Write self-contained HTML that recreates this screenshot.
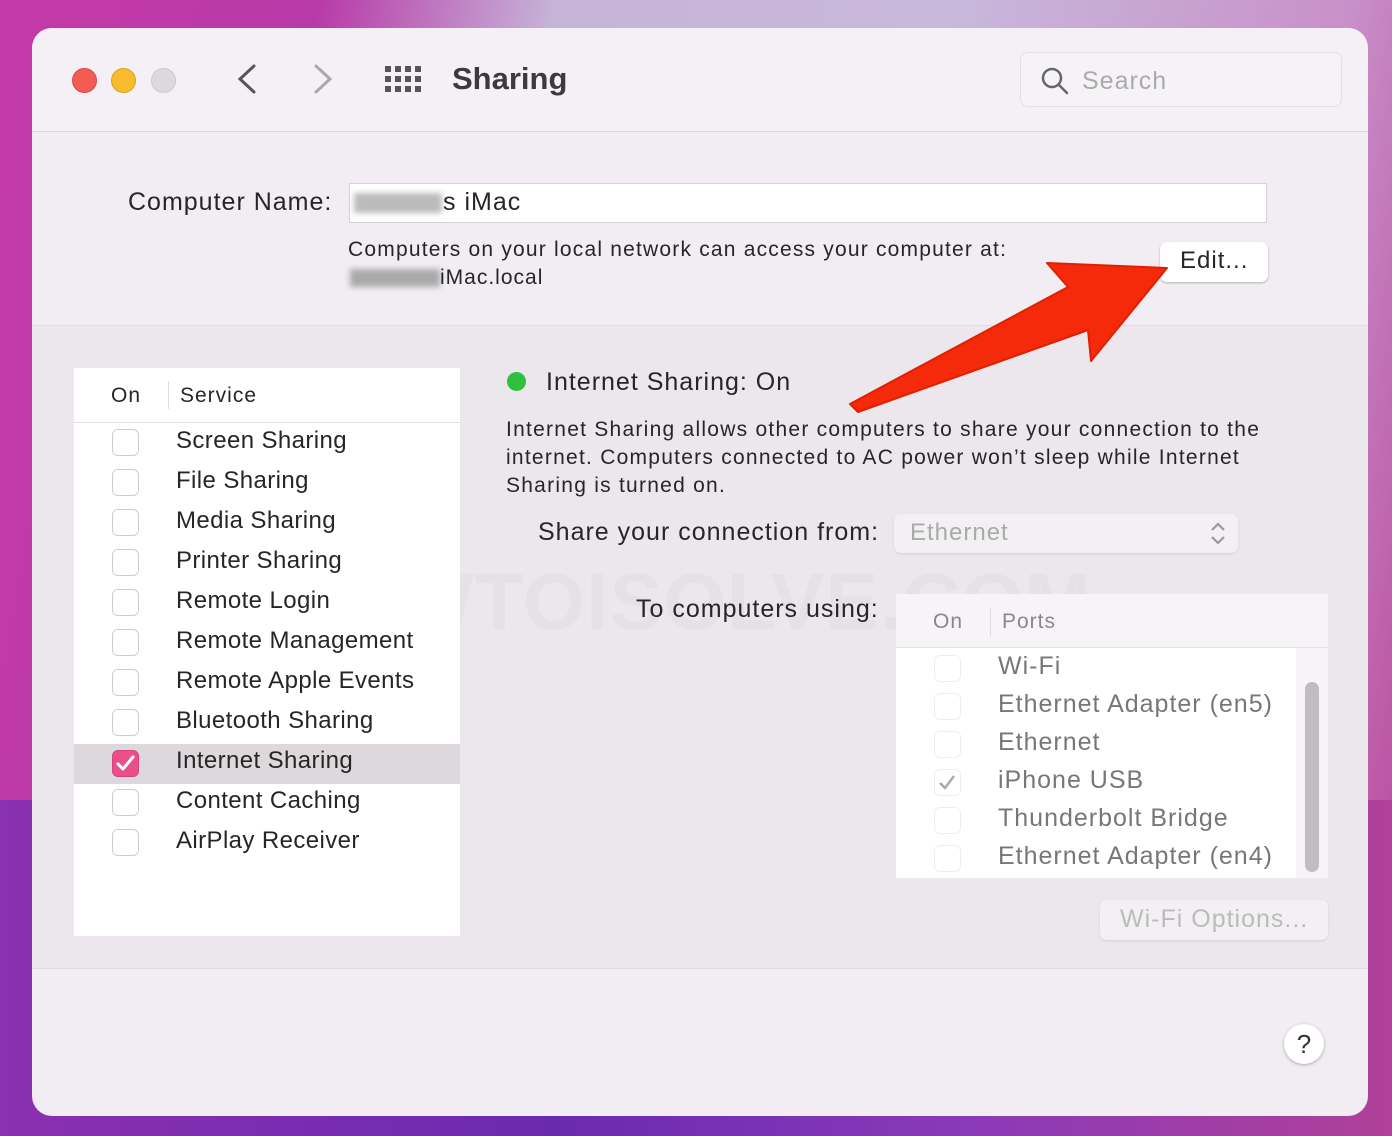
<!DOCTYPE html>
<html><head><meta charset="utf-8"><style>
*{margin:0;padding:0;box-sizing:border-box}
body{width:1392px;height:1136px;overflow:hidden;font-family:"Liberation Sans",sans-serif;background:linear-gradient(100deg,#c43aa8 0%,#b83aa8 20%,#c6b4d8 35%,#c8b8dc 60%,#c890c8 85%,#b84098 100%);position:relative}
.bgbot{position:absolute;left:0;top:800px;width:1392px;height:336px;background:linear-gradient(90deg,#8a30b0,#6a2ab0 40%,#8a3ab8 70%,#b04098)}
.win{position:absolute;left:32px;top:28px;width:1336px;height:1088px;border-radius:20px;overflow:hidden;background:#f1edf2}
.tb{position:absolute;left:0;top:0;width:100%;height:104px;background:#f4f0f5;border-bottom:1px solid #dcd8dd}
.mid{position:absolute;left:0;top:297px;width:100%;height:644px;background:#ebe7ec;border-top:1px solid #e0dce1;border-bottom:1px solid #e0dce1}
.t{position:absolute;white-space:nowrap;color:#262626;letter-spacing:1px}
.l{letter-spacing:0.4px}
.dot{position:absolute;width:25px;height:25px;border-radius:50%;top:40px}
.cb{position:absolute;width:27px;height:27px;border:1px solid #cfcbd0;border-radius:6px;background:#fff}
.list{position:absolute;background:#fff}
</style></head><body>
<div class="bgbot"></div>
<div class="win">
<div class="tb"></div>
<div class="dot" style="left:40px;background:#f25c54;border:1px solid #d94a44"></div>
<div class="dot" style="left:79px;background:#f7bb2d;border:1px solid #d9a020"></div>
<div class="dot" style="left:119px;background:#dcd8dd;border:1px solid #ccc8cd"></div>
<svg style="position:absolute;left:200px;top:34px" width="110" height="36"><path d="M22 4 L8 17 L22 30" stroke="#555" stroke-width="3" fill="none" stroke-linecap="round"/><path d="M84 4 L98 17 L84 30" stroke="#aaa" stroke-width="3" fill="none" stroke-linecap="round"/></svg>
<svg style="position:absolute;left:353px;top:38px" width="38" height="28"><g fill="#555"><rect x="0" y="0" width="6" height="6"/><rect x="10" y="0" width="6" height="6"/><rect x="20" y="0" width="6" height="6"/><rect x="30" y="0" width="6" height="6"/><rect x="0" y="10" width="6" height="6"/><rect x="10" y="10" width="6" height="6"/><rect x="20" y="10" width="6" height="6"/><rect x="30" y="10" width="6" height="6"/><rect x="0" y="20" width="6" height="6"/><rect x="10" y="20" width="6" height="6"/><rect x="20" y="20" width="6" height="6"/><rect x="30" y="20" width="6" height="6"/></g></svg>
<div class="t" style="left:420px;top:33px;font-size:31px;font-weight:bold;color:#3d3a3f;letter-spacing:0">Sharing</div>
<div style="position:absolute;left:988px;top:24px;width:322px;height:55px;border:1px solid #e2dee3;border-radius:8px;background:#f6f3f7"></div>
<svg style="position:absolute;left:1008px;top:38px" width="30" height="30"><circle cx="12" cy="12" r="9" stroke="#666" stroke-width="2.5" fill="none"/><path d="M19 19 L27 27" stroke="#666" stroke-width="2.5" stroke-linecap="round"/></svg>
<div class="t" style="left:1050px;top:39px;font-size:25px;color:#aaa">Search</div>

<div class="t" style="left:96px;top:160px;font-size:25px">Computer Name:</div>
<div style="position:absolute;left:317px;top:155px;width:918px;height:40px;background:#fff;border:1px solid #d6d2d7"></div>
<div style="position:absolute;left:322px;top:165px;width:88px;height:20px;background:#bbb;filter:blur(3px)"></div>
<div class="t" style="left:411px;top:160px;font-size:25px">s iMac</div>
<div class="t" style="left:316px;top:210px;font-size:21px;letter-spacing:1.2px">Computers on your local network can access your computer at:</div>
<div style="position:absolute;left:318px;top:241px;width:90px;height:18px;background:#aaa;filter:blur(3px)"></div>
<div class="t" style="left:408px;top:238px;font-size:21px">iMac.local</div>
<div style="position:absolute;left:1128px;top:214px;width:108px;height:40px;background:#fff;border-radius:7px;box-shadow:0 1px 2px rgba(0,0,0,.25)"></div>
<div class="t" style="left:1148px;top:219px;font-size:24px">Edit...</div>

<div class="mid"></div>
<div class="t" style="left:120px;top:528px;font-size:80px;font-weight:bold;color:rgba(120,110,120,.05)">(c) HOWTOISOLVE.COM</div>
<div class="list" style="left:42px;top:340px;width:386px;height:568px"></div>
<div style="position:absolute;left:42px;top:394px;width:386px;height:1px;background:#e4e0e5"></div>
<div style="position:absolute;left:136px;top:353px;width:1px;height:28px;background:#ddd"></div>
<div class="t" style="left:79px;top:356px;font-size:21px">On</div>
<div class="t" style="left:148px;top:356px;font-size:21px">Service</div>
<div style="position:absolute;left:42px;top:716px;width:386px;height:40px;background:#dcd8dc"></div>
<div class="cb" style="left:80px;top:401px"></div><div class="t l" style="left:144px;top:399px;font-size:24px">Screen Sharing</div>
<div class="cb" style="left:80px;top:441px"></div><div class="t l" style="left:144px;top:439px;font-size:24px">File Sharing</div>
<div class="cb" style="left:80px;top:481px"></div><div class="t l" style="left:144px;top:479px;font-size:24px">Media Sharing</div>
<div class="cb" style="left:80px;top:521px"></div><div class="t l" style="left:144px;top:519px;font-size:24px">Printer Sharing</div>
<div class="cb" style="left:80px;top:561px"></div><div class="t l" style="left:144px;top:559px;font-size:24px">Remote Login</div>
<div class="cb" style="left:80px;top:601px"></div><div class="t l" style="left:144px;top:599px;font-size:24px">Remote Management</div>
<div class="cb" style="left:80px;top:641px"></div><div class="t l" style="left:144px;top:639px;font-size:24px">Remote Apple Events</div>
<div class="cb" style="left:80px;top:681px"></div><div class="t l" style="left:144px;top:679px;font-size:24px">Bluetooth Sharing</div>
<div class="cb" style="left:80px;top:722px;background:#ea4f8a;border-color:#d84080"><svg width="27" height="27" style="position:absolute;left:-1px;top:-1px"><path d="M6 14 L11 19 L21 7" stroke="#fff" stroke-width="3" fill="none" stroke-linecap="round" stroke-linejoin="round"/></svg></div><div class="t l" style="left:144px;top:719px;font-size:24px">Internet Sharing</div>
<div class="cb" style="left:80px;top:761px"></div><div class="t l" style="left:144px;top:759px;font-size:24px">Content Caching</div>
<div class="cb" style="left:80px;top:801px"></div><div class="t l" style="left:144px;top:799px;font-size:24px">AirPlay Receiver</div>

<div style="position:absolute;left:475px;top:344px;width:19px;height:19px;border-radius:50%;background:#2ec13f"></div>
<div class="t" style="left:514px;top:340px;font-size:25px">Internet Sharing: On</div>
<div class="t" style="left:474px;top:388px;font-size:21px;line-height:28px;letter-spacing:1.25px">Internet Sharing allows other computers to share your connection to the<br>internet. Computers connected to AC power won’t sleep while Internet<br>Sharing is turned on.</div>
<div class="t" style="left:506px;top:490px;font-size:25px">Share your connection from:</div>
<div style="position:absolute;left:862px;top:486px;width:344px;height:39px;background:#f3f0f4;border-radius:7px;box-shadow:0 1px 2px rgba(0,0,0,.1)"></div>
<div class="t" style="left:878px;top:491px;font-size:24px;color:#aaa">Ethernet</div>
<svg style="position:absolute;left:1176px;top:492px" width="20" height="28"><path d="M4 10 L10 4 L16 10 M4 17 L10 23 L16 17" stroke="#999" stroke-width="2.2" fill="none"/></svg>
<div class="t" style="left:604px;top:567px;font-size:25px">To computers using:</div>
<div style="position:absolute;left:864px;top:566px;width:432px;height:284px;background:#fff"></div>
<div style="position:absolute;left:864px;top:566px;width:432px;height:54px;background:#f7f4f8;border-bottom:1px solid #e4e0e5"></div>
<div style="position:absolute;left:958px;top:580px;width:1px;height:28px;background:#ddd"></div>
<div class="t" style="left:901px;top:582px;font-size:21px;color:#888">On</div>
<div class="t" style="left:970px;top:582px;font-size:21px;color:#888">Ports</div>
<div style="position:absolute;left:1264px;top:620px;width:32px;height:230px;background:#f7f4f8"></div>
<div style="position:absolute;left:1273px;top:654px;width:14px;height:190px;border-radius:7px;background:#c0bdc1"></div>
<div class="cb" style="left:902px;top:627px;border-color:#eee"></div><div class="t" style="left:966px;top:624px;font-size:25px;color:#777">Wi-Fi</div>
<div class="cb" style="left:902px;top:665px;border-color:#eee"></div><div class="t" style="left:966px;top:662px;font-size:25px;color:#777">Ethernet Adapter (en5)</div>
<div class="cb" style="left:902px;top:703px;border-color:#eee"></div><div class="t" style="left:966px;top:700px;font-size:25px;color:#777">Ethernet</div>
<div class="cb" style="left:902px;top:741px;border-color:#eee"><svg width="27" height="27" style="position:absolute;left:-1px;top:-1px"><path d="M6 14 L11 19 L20 7" stroke="#aaa" stroke-width="2.5" fill="none"/></svg></div><div class="t" style="left:966px;top:738px;font-size:25px;color:#777">iPhone USB</div>
<div class="cb" style="left:902px;top:779px;border-color:#eee"></div><div class="t" style="left:966px;top:776px;font-size:25px;color:#777">Thunderbolt Bridge</div>
<div class="cb" style="left:902px;top:817px;border-color:#eee"></div><div class="t" style="left:966px;top:814px;font-size:25px;color:#777">Ethernet Adapter (en4)</div>
<div style="position:absolute;left:1068px;top:872px;width:228px;height:40px;background:#f3f0f4;border-radius:7px;box-shadow:0 1px 2px rgba(0,0,0,.1)"></div>
<div class="t" style="left:1088px;top:877px;font-size:25px;color:#bbb">Wi-Fi Options...</div>

<div style="position:absolute;left:1252px;top:996px;width:40px;height:40px;border-radius:50%;background:#fff;box-shadow:0 1px 3px rgba(0,0,0,.3);text-align:center;font-size:26px;line-height:40px;color:#333">?</div>
</div>
<svg style="position:absolute;left:0;top:0" width="1392" height="1136"><polygon points="850,404 1068,287 1047,263 1167,268 1091,361 1088,330 858,412" fill="#f52a0a" stroke="#e02000" stroke-width="2" stroke-linejoin="round"/></svg>
</body></html>
